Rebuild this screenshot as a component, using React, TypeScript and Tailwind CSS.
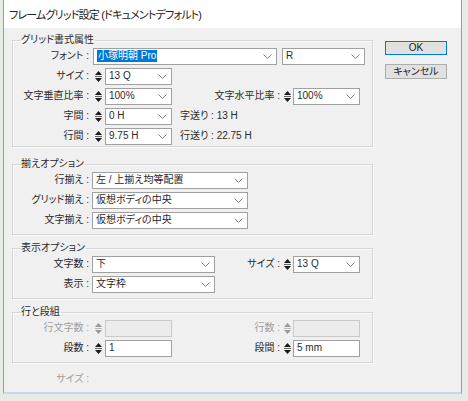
import React from "react";

const FONT = "font-['Liberation_Sans','Noto_Sans_CJK_JP',sans-serif] [font-feature-settings:'palt']";

function Chevron() {
  return (
    <svg width="9" height="5" viewBox="0 0 9 5" fill="none" stroke="#808080" strokeWidth="1">
      <polyline points="0.5,0.5 4.5,4.5 8.5,0.5" />
    </svg>
  );
}

function Spinner({ disabled = false }: { disabled?: boolean }) {
  const c = disabled ? "#9a9a9a" : "#1a1a1a";
  return (
    <svg width="9" height="17" viewBox="0 0 9 17" className="shrink-0">
      <polygon points="4.5,3 8,7 1,7" fill={c} />
      <line x1="1" y1="8.5" x2="8" y2="8.5" stroke={disabled ? "#bbb" : "#666"} strokeWidth="1" />
      <polygon points="1,10 8,10 4.5,14" fill={c} />
    </svg>
  );
}

function Combo({ w, value, selected = false }: { w: string; value: string; selected?: boolean }) {
  return (
    <div className={`${w} h-[17px] shrink-0 bg-white border border-[#a0a0a0] flex items-center justify-between pl-[3px] pr-[4px]`}>
      {selected ? (
        <span className="bg-[#0078d7] text-white px-[1px] leading-[12px]">{value}</span>
      ) : (
        <span className="leading-[12px]">{value}</span>
      )}
      <Chevron />
    </div>
  );
}

function Field({ value, disabled = false }: { value: string; disabled?: boolean }) {
  return (
    <div
      className={`w-[67px] h-[17px] shrink-0 flex items-center pl-[3px] border ${
        disabled ? "bg-[#ececec] border-[#c9c9c9]" : "bg-white border-[#a0a0a0]"
      }`}
    >
      <span className="leading-[12px]">{value}</span>
    </div>
  );
}

function Label({ w = "w-[76px]", children, disabled = false }: { w?: string; children: React.ReactNode; disabled?: boolean }) {
  return (
    <span className={`${w} shrink-0 text-right whitespace-nowrap leading-[12px] ${disabled ? "text-[#a0a0a0]" : "text-[#2a2a2a]"}`}>
      {children}
    </span>
  );
}

function Group({ title, className = "", children }: { title: string; className?: string; children: React.ReactNode }) {
  return (
    <fieldset className={`w-[361px] m-0 pl-[8px] pr-0 border border-[#d6d6d6] shadow-[inset_1px_1px_0_#fbfbfb,1px_1px_0_#fbfbfb] ${className}`}>
      <legend className="p-0 pr-[1px] leading-[12px] text-[#2a2a2a]">{title}</legend>
      <div className="-ml-[8px]">{children}</div>
    </fieldset>
  );
}

export default function App() {
  return (
    <div className={`w-[468px] h-[401px] bg-[#e6ebe6] overflow-hidden text-[10px] text-[#2a2a2a] ${FONT}`}>
      <div className="ml-[3px] w-[459px] h-[394px] flex flex-col border-x border-[#9c9c9c] border-b-2 border-b-[#c4d9ee] bg-[#f0f0f0]">
        {/* title bar */}
        <div className="h-[28px] bg-white flex items-center pl-[5px] pt-[2px] shrink-0">
          <span className="text-[11px] tracking-[-0.8px] text-[#222] leading-[14px]">フレームグリッド設定 (ドキュメントデフォルト)</span>
        </div>

        <div className="flex pl-[8px]">
          {/* left column */}
          <div className="flex flex-col pt-[6px]">
            <Group title="グリッド書式属性">
              <div className="flex items-center h-[20px]">
                <Label>フォント :</Label>
                <div className="ml-[4px]">
                  <Combo w="w-[184px]" value="小塚明朝 Pro" selected />
                </div>
                <div className="ml-[5px]">
                  <Combo w="w-[83px]" value="R" />
                </div>
              </div>
              <div className="flex items-center h-[20px]">
                <Label>サイズ :</Label>
                <div className="ml-[5px]"><Spinner /></div>
                <div className="ml-[2px]"><Combo w="w-[67px]" value="13 Q" /></div>
              </div>
              <div className="flex items-center h-[20px]">
                <Label>文字垂直比率 :</Label>
                <div className="ml-[5px]"><Spinner /></div>
                <div className="ml-[2px]"><Combo w="w-[67px]" value="100%" /></div>
                <Label w="w-[108px]">文字水平比率 :</Label>
                <div className="ml-[3px]"><Spinner /></div>
                <div className="ml-[1px]"><Combo w="w-[67px]" value="100%" /></div>
              </div>
              <div className="flex items-center h-[20px]">
                <Label>字間 :</Label>
                <div className="ml-[5px]"><Spinner /></div>
                <div className="ml-[2px]"><Combo w="w-[67px]" value="0 H" /></div>
                <span className="ml-[8px] leading-[12px]">字送り : 13 H</span>
              </div>
              <div className="flex items-center h-[20px]">
                <Label>行間 :</Label>
                <div className="ml-[5px]"><Spinner /></div>
                <div className="ml-[2px]"><Combo w="w-[67px]" value="9.75 H" /></div>
                <span className="ml-[8px] leading-[12px]">行送り : 22.75 H</span>
              </div>
            </Group>

            <Group title="揃えオプション" className="mt-[11px] pb-[4px]">
              <div className="flex items-center h-[20px]">
                <Label>行揃え :</Label>
                <div className="ml-[3px]"><Combo w="w-[156px]" value="左 / 上揃え均等配置" /></div>
              </div>
              <div className="flex items-center h-[20px]">
                <Label>グリッド揃え :</Label>
                <div className="ml-[3px]"><Combo w="w-[156px]" value="仮想ボディの中央" /></div>
              </div>
              <div className="flex items-center h-[20px]">
                <Label>文字揃え :</Label>
                <div className="ml-[3px]"><Combo w="w-[156px]" value="仮想ボディの中央" /></div>
              </div>
            </Group>

            <Group title="表示オプション" className="mt-[7px] pb-[4px]">
              <div className="flex items-center h-[20px]">
                <Label>文字数 :</Label>
                <div className="ml-[3px]"><Combo w="w-[123px]" value="下" /></div>
                <Label w="w-[65px]">サイズ :</Label>
                <div className="ml-[3px]"><Spinner /></div>
                <div className="ml-[1px]"><Combo w="w-[67px]" value="13 Q" /></div>
              </div>
              <div className="flex items-center h-[20px]">
                <Label>表示 :</Label>
                <div className="ml-[3px]"><Combo w="w-[123px]" value="文字枠" /></div>
              </div>
            </Group>

            <Group title="行と段組" className="mt-[7px] pb-[4px]">
              <div className="flex items-center h-[20px]">
                <Label disabled>行文字数 :</Label>
                <div className="ml-[5px]"><Spinner disabled /></div>
                <div className="ml-[2px]"><Field value="" disabled /></div>
                <Label w="w-[108px]" disabled>行数 :</Label>
                <div className="ml-[3px]"><Spinner disabled /></div>
                <div className="ml-[1px]"><Field value="" disabled /></div>
              </div>
              <div className="flex items-center h-[20px]">
                <Label>段数 :</Label>
                <div className="ml-[5px]"><Spinner /></div>
                <div className="ml-[2px]"><Field value="1" /></div>
                <Label w="w-[108px]">段間 :</Label>
                <div className="ml-[3px]"><Spinner /></div>
                <div className="ml-[1px]"><Field value="5 mm" /></div>
              </div>
            </Group>

            <div className="flex items-center h-[20px] mt-[6px] ml-[1px]">
              <Label disabled>サイズ :</Label>
            </div>
          </div>

          {/* buttons */}
          <div className="flex flex-col ml-[12px] pt-[13px]">
            <button className="w-[62px] h-[14px] border border-[#0078d7] bg-[#e1e1e1] shadow-[inset_0_0_0_1px_#e8e4d4] text-[10px] leading-[12px] text-[#222]">
              OK
            </button>
            <button className="w-[62px] h-[15px] mt-[9px] border border-[#adadad] bg-[#e1e1e1] text-[10px] leading-[12px] text-[#222]">
              キャンセル
            </button>
          </div>
        </div>
      </div>
    </div>
  );
}
